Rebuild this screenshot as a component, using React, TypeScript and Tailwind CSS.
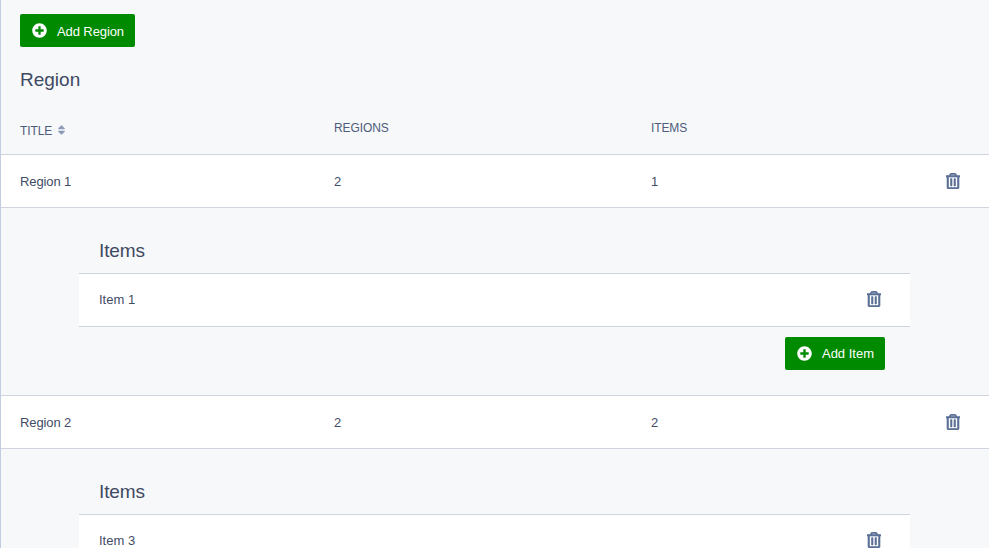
import { FaPlusCircle, FaRegTrashAlt, FaSort } from "react-icons/fa";

function AddButton({ label, narrow }: { label: string; narrow?: boolean }) {
  return (
    <button className={narrow ? "flex h-[33px] items-center rounded-[2px] bg-[#008a00] pl-[12px] pr-[11px] text-[13px] tracking-[-0.1px] text-white" : "flex h-[33px] items-center rounded-[2px] bg-[#008a00] pl-[12px] pr-[11px] text-[13px] text-white"}>
      <FaPlusCircle className="mr-[10px] h-[15px] w-[15px]" />
      <span className={narrow ? "pt-[2px]" : "pt-0"}>{label}</span>
    </button>
  );
}

function Trash() {
  return <FaRegTrashAlt className="h-[16px] w-[14px] stroke-[20px] text-[#5b7096]" />;
}

function RegionRow({ title, regions, items }: { title: string; regions: string; items: string }) {
  return (
    <div className="flex h-[54px] items-center border-t border-b border-[#cfd4df] bg-white pl-[19px] pr-[29px] text-[13px] tracking-[-0.1px] text-[#3f4c66]">
      <div className="w-[314px] pt-[1px]">{title}</div>
      <div className="w-[317px] pt-[1px]">{regions}</div>
      <div className="flex-1 pt-[1px]">{items}</div>
      <Trash />
    </div>
  );
}

function ItemsPanel({ item, button }: { item: string; button: boolean }) {
  return (
    <div className="pl-[78px] pr-[79px]">
      <h3 className="flex h-[65px] items-center pl-[20px] pt-[20px] text-[19px] leading-[24px] tracking-[-0.1px] text-[#3e4a62]">Items</h3>
      <div className="flex h-[54px] items-center border-t border-b border-[#cfd4df] bg-white pl-[20px] pr-[29px] text-[13px] text-[#3f4c66]">
        <div className="flex-1">{item}</div>
        <div className="mb-[2px] flex">
          <Trash />
        </div>
      </div>
      {button && (
        <div className="flex justify-end pb-[25px] pr-[25px] pt-[10px]">
          <AddButton label="Add Item" />
        </div>
      )}
    </div>
  );
}

export default function App() {
  return (
    <div className="h-[548px] overflow-hidden border-l border-[#c3cde0] bg-[#f7f8fa] font-['Liberation_Sans',Arial,sans-serif]">
      <div className="pl-[19px] pt-[14px]">
        <div className="flex">
          <AddButton label="Add Region" narrow />
        </div>
        <h2 className="mt-[20px] text-[19px] leading-[26px] text-[#3e4a62]">Region</h2>
      </div>
      <div className="flex h-[61px] items-start pl-[19px] pt-[26px] text-[12px] tracking-[-0.1px] text-[#4d5b7c]">
        <div className="flex w-[314px] items-center">
          <span className="mt-[3px]">TITLE</span>
          <FaSort className="ml-[5px] mt-[1px] h-[12px] w-[9px] text-[#8e9bb8]" />
        </div>
        <div className="w-[317px]">REGIONS</div>
        <div>ITEMS</div>
      </div>
      <RegionRow title="Region 1" regions="2" items="1" />
      <ItemsPanel item="Item 1" button />
      <RegionRow title="Region 2" regions="2" items="2" />
      <ItemsPanel item="Item 3" button={false} />
    </div>
  );
}
